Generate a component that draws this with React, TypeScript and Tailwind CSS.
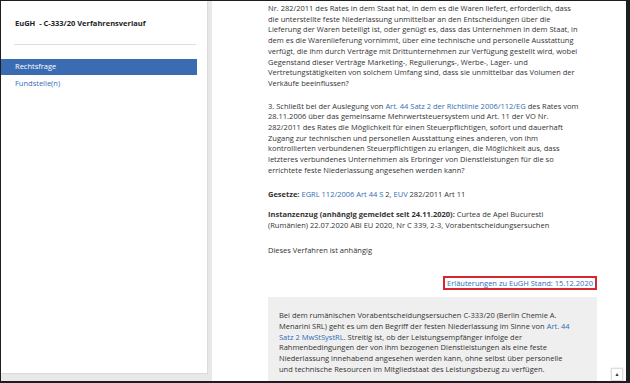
import React from "react";

const L = ({ children }: { children: React.ReactNode }) => (
  <span className="text-[#2f6db5]">{children}</span>
);

export default function App() {
  return (
    <div className="w-[630px] h-[383px] bg-[#1e1e1e] pt-px pl-px pr-[4px] pb-[2px] font-['Open_Sans',sans-serif] text-[7.5px] leading-[10.7px] text-[#333]">
      <div className="flex h-full bg-[#e9e9e9]">
        <aside className="w-[206px] h-[372px] bg-white pt-[17px] shadow-[1px_1px_1px_rgba(0,0,0,0.06)]">
          <div className="pl-[14px] font-bold text-[#222] whitespace-pre">EuGH  - C-333/20 Verfahrensverlauf</div>
          <div className="ml-[13px] w-[182px] mt-[15px] h-px bg-[#dedede]" />
          <div className="mt-[14px] w-[196px] h-[16px] bg-[#3a6cb4] text-white flex items-center pl-[14px]">
            Rechtsfrage
          </div>
          <div className="mt-[3px] pl-[14px] text-[#2f6db5]">Fundstelle(n)</div>
        </aside>
        <main className="relative ml-[5px] flex-1 bg-white overflow-hidden pl-[56px] pt-[2px]">
          <div className="w-[340px] whitespace-nowrap">
            <p>
              Nr. 282/2011 des Rates in dem Staat hat, in dem es die Waren liefert, erforderlich, dass<br />
              die unterstellte feste Niederlassung unmittelbar an den Entscheidungen über die<br />
              Lieferung der Waren beteiligt ist, oder genügt es, dass das Unternehmen in dem Staat, in<br />
              dem es die Warenlieferung vornimmt, über eine technische und personelle Ausstattung<br />
              verfügt, die ihm durch Verträge mit Drittunternehmen zur Verfügung gestellt wird, wobei<br />
              Gegenstand dieser Verträge Marketing-, Regulierungs-, Werbe-, Lager- und<br />
              Vertretungstätigkeiten von solchem Umfang sind, dass sie unmittelbar das Volumen der<br />
              Verkäufe beeinflussen?
            </p>
            <p className="mt-[12px]">
              3. Schließt bei der Auslegung von <L>Art. 44 Satz 2 der Richtlinie 2006/112/EG</L> des Rates vom<br />
              28.11.2006 über das gemeinsame Mehrwertsteuersystem und Art. 11 der VO Nr.<br />
              282/2011 des Rates die Möglichkeit für einen Steuerpflichtigen, sofort und dauerhaft<br />
              Zugang zur technischen und personellen Ausstattung eines anderen, von ihm<br />
              kontrollierten verbundenen Steuerpflichtigen zu erlangen, die Möglichkeit aus, dass<br />
              letzteres verbundenes Unternehmen als Erbringer von Dienstleistungen für die so<br />
              errichtete feste Niederlassung angesehen werden kann?
            </p>
            <p className="mt-[13px]">
              <b className="font-bold">Gesetze:</b> <L>EGRL 112/2006 Art 44 S</L> 2, <L>EUV</L> 282/2011 Art 11
            </p>
            <p className="mt-[10px]">
              <b className="font-bold">Instanzenzug (anhängig gemeldet seit 24.11.2020):</b> Curtea de Apel Bucuresti<br />
              (Rumänien) 22.07.2020 ABl EU 2020, Nr C 339, 2-3, Vorabentscheidungsersuchen
            </p>
            <p className="mt-[14px]">Dieses Verfahren ist anhängig</p>
          </div>
          <div className="w-[329px] flex justify-end mt-[21px]">
            <span className="border-2 border-[#d8262e] px-[2px] leading-[8px] py-px text-[#2f6db5]">
              Erläuterungen zu EuGH Stand: 15.12.2020
            </span>
          </div>
          <div className="w-[329px] mt-[7px] bg-[#efefef] pl-[11px] pt-[13px] pb-[12px] whitespace-nowrap">
            Bei dem rumänischen Vorabentscheidungsersuchen C-333/20 (Berlin Chemie A.<br />
            Menarini SRL) geht es um den Begriff der festen Niederlassung im Sinne von <L>Art. 44</L><br />
            <L>Satz 2 MwStSystRL</L>. Streitig ist, ob der Leistungsempfänger infolge der<br />
            Rahmenbedingungen der von ihm bezogenen Dienstleistungen als eine feste<br />
            Niederlassung innehabend angesehen werden kann, ohne selbst über personelle<br />
            und technische Resourcen im Mitgliedstaat des Leistungsbezug zu verfügen.
          </div>
          <div className="absolute right-[3px] bottom-0 w-[12px] h-[13px] bg-white border border-[#ddd] shadow-[0_0_2px_rgba(0,0,0,0.15)] flex items-center justify-center text-[5px] leading-none text-[#333]">
            ▲
          </div>
        </main>
      </div>
    </div>
  );
}
